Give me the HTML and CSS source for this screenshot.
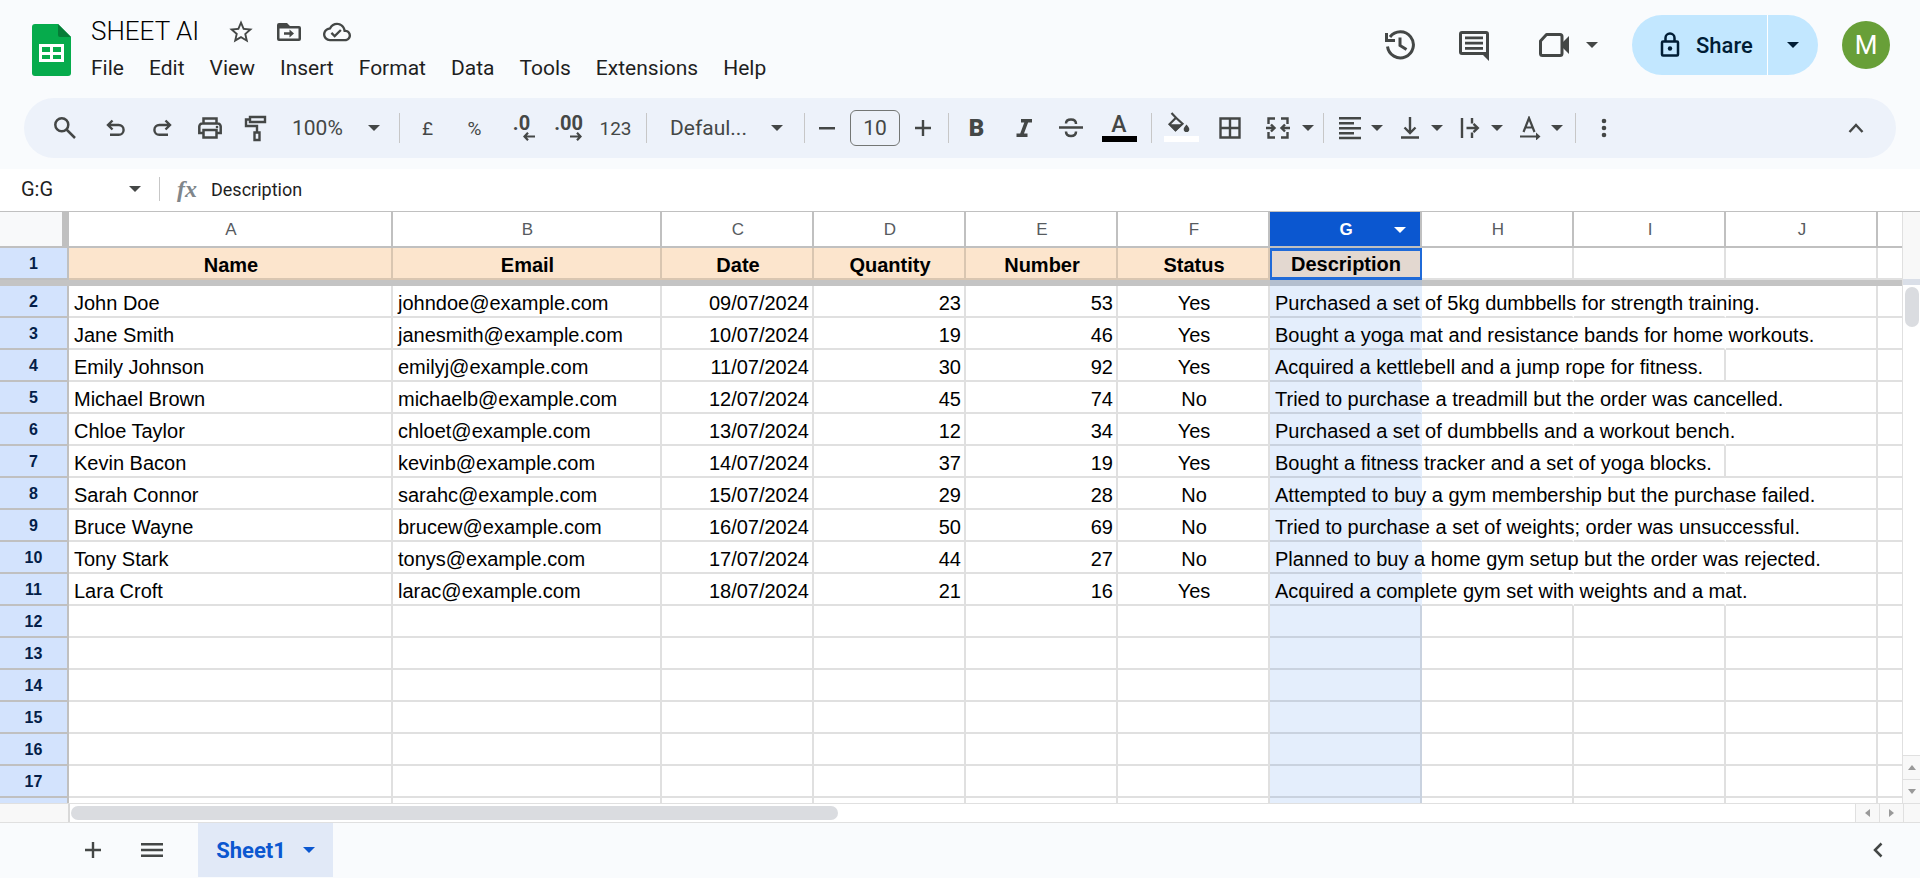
FILE: index.html
```html
<!DOCTYPE html>
<html lang="en">
<head>
    <meta charset="UTF-8"/>
    <meta name="viewport" content="width=device-width, initial-scale=1.0"/>
    <title>SHEET AI</title>
    <link rel="stylesheet" href="styles.css">
</head>
<body>
<svg class="defs" aria-hidden="true">
    <symbol id="caret" viewBox="0 0 12 6"><path d="M0 0h12L6 6z"/></symbol>
</svg>

<header class="header">
    <svg class="logo" viewBox="0 0 39 52" aria-label="Sheets" role="img">
        <path fill="#06ab4c" d="M3 0h23l13 13v36a3 3 0 0 1-3 3H3a3 3 0 0 1-3-3V3a3 3 0 0 1 3-3z"/>
        <path fill="#067c37" d="M26 0l13 13H28a2 2 0 0 1-2-2z"/>
        <path fill="#fff" fill-rule="evenodd" d="M7 20h25v18H7zM10 23v5h8v-5zM21 23v5h8v-5zM10 31v4h8v-4zM21 31v4h8v-4z"/>
    </svg>
    <div class="doc">
        <div class="doc-top">
            <input class="title" aria-label="Document name" value="SHEET AI">
            <button class="icon-btn" aria-label="Star">
                <svg width="28" height="28" viewBox="0 0 24 24"><path d="M22 9.24l-7.19-.62L12 2 9.19 8.63 2 9.24l5.46 4.73L5.82 21 12 17.27 18.18 21l-1.63-7.03L22 9.24zM12 15.4l-3.76 2.27 1-4.28-3.32-2.88 4.38-.38L12 6.1l1.71 4.04 4.38.38-3.32 2.88 1 4.28L12 15.4z"/></svg>
            </button>
            <button class="icon-btn" aria-label="Move">
                <svg width="28" height="26" viewBox="0 0 28 26"><path fill-rule="evenodd" d="M4 4h8l3 3h9a2 2 0 0 1 2 2v11a2 2 0 0 1-2 2H4a2 2 0 0 1-2-2V6a2 2 0 0 1 2-2zM4.500 9.500v10h19v-10z"/><path d="M14.500 10.500l4.500 4-4.500 4v-2.700H9v-2.600h5.500z"/></svg>
            </button>
            <button class="icon-btn" aria-label="Document status">
                <svg width="28" height="26" viewBox="0 0 24 22"><path d="M19.350 9.040C18.670 5.590 15.640 3 12 3 9.110 3 6.600 4.640 5.350 7.040 2.340 7.360 0 9.910 0 13c0 3.310 2.690 6 6 6h13c2.760 0 5-2.240 5-5 0-2.640-2.050-4.780-4.650-4.960zM19 17H6c-2.210 0-4-1.790-4-4 0-2.050 1.530-3.760 3.560-3.970l1.070-.11.5-.95C8.080 6.140 9.940 5 12 5c2.620 0 4.880 1.860 5.390 4.430l.3 1.500 1.530.11c1.560.1 2.780 1.410 2.780 2.960 0 1.650-1.350 3-3 3zm-9-3.820l-2.090-2.090L6.500 12.500 10 16l6.010-6.010-1.410-1.410z"/></svg>
            </button>
        </div>
        <nav class="menu" aria-label="Main menu">
            <button>File</button>
            <button>Edit</button>
            <button>View</button>
            <button>Insert</button>
            <button>Format</button>
            <button>Data</button>
            <button>Tools</button>
            <button>Extensions</button>
            <button>Help</button>
        </nav>
    </div>
    <div class="actions">
        <button class="icon-btn" aria-label="Version history">
            <svg width="32" height="32" viewBox="0 0 32 32" fill="none" stroke="#444746" stroke-width="3"><path d="M3.500 17.500a13 13 0 1 0 2.500-9.500"/><path d="M2.500 4v7.500H11M16 8.500v8l6.500 4"/></svg>
        </button>
        <button class="icon-btn" aria-label="Comments">
            <svg width="32" height="32" viewBox="0 0 32 32"><path fill-rule="evenodd" d="M4 2h24a3 3 0 0 1 3 3v27l-6-6H4a3 3 0 0 1-3-3V5a3 3 0 0 1 3-3zM4 5v18h24V5z"/><path d="M7 7.500h18v2.700H7zM7 12.700h18v2.700H7zM7 18h18v2.700H7z"/></svg>
        </button>
        <button class="icon-btn meet" aria-label="Meet">
            <svg width="32" height="28" viewBox="0 0 32 28"><path fill="none" stroke="#444746" stroke-width="3" stroke-linejoin="round" d="M8.500 3.500H22a2 2 0 0 1 2 2v17a2 2 0 0 1-2 2H4.500a2 2 0 0 1-2-2V10z"/><path d="M24 12l7-7v18l-7-7z"/></svg>
            <svg class="caret"><use href="#caret"/></svg>
        </button>
        <div class="share">
            <button class="share-main">
                <svg width="20" height="26" viewBox="0 0 20 26" fill="none" stroke="#001d35" stroke-width="2.500"><rect x="2" y="9.500" width="16" height="14" rx="1"/><path d="M5.500 9.500V6a4.500 4.500 0 0 1 9 0v3.500"/><circle cx="10" cy="16.500" r="2.200" fill="#001d35" stroke="none"/></svg>
                Share
            </button>
            <button class="share-more" aria-label="Share options"><svg class="caret"><use href="#caret"/></svg></button>
        </div>
        <button class="avatar" aria-label="Account">M</button>
    </div>
</header>

<div class="toolbar" role="toolbar" aria-label="Formatting">
    <button class="tool search" aria-label="Search">
        <svg width="24" height="24" viewBox="0 0 24 24" fill="none" stroke="#444746" stroke-width="2.500"><circle cx="8.800" cy="8.800" r="6.500"/><path d="M13.500 13.500l8.500 8.500"/></svg>
    </button>
    <button class="tool" aria-label="Undo">
        <svg width="24" height="24" viewBox="0 0 24 24" fill="none" stroke="#444746" stroke-width="2.400"><path d="M8.500 4.500L4 9l4.500 4.500M4 9h10.700a4.900 4.900 0 0 1 0 9.800H6"/></svg>
    </button>
    <button class="tool" aria-label="Redo">
        <svg width="24" height="24" viewBox="0 0 24 24" fill="none" stroke="#444746" stroke-width="2.400"><path d="M14.500 4.500L19 9l-4.500 4.500M19 9H8.300a4.900 4.900 0 0 0 0 9.800H17"/></svg>
    </button>
    <button class="tool" aria-label="Print">
        <svg width="26" height="24" viewBox="0 0 26 24" fill="none" stroke="#444746" stroke-width="2.500"><path d="M6.500 7V2.500h13V7M6.500 17H2.300v-6.500A3 3 0 0 1 5.300 7.500h15.400a3 3 0 0 1 3 3V17h-4.200M6.500 14h13v7.500h-13z"/><circle cx="20" cy="11" r="1.300" fill="#444746" stroke="none"/></svg>
    </button>
    <button class="tool" aria-label="Paint format">
        <svg width="26" height="28" viewBox="0 0 26 28" fill="none" stroke="#444746" stroke-width="2.400"><path d="M6 3h15v5H6zM6 5.500H2v6.500h11v6M10.500 18.500h5V26h-5z"/></svg>
    </button>
    <select class="zoom" aria-label="Zoom"><option>100%</option></select>
    <span class="divider"></span>
    <button class="tool sign" aria-label="Format as currency">£</button>
    <button class="tool sign" aria-label="Format as percent">%</button>
    <button class="tool decimals" aria-label="Decrease decimal places">.0
        <svg width="12" height="9" viewBox="0 0 12 9"><path fill="none" stroke="#444746" stroke-width="2.200" d="M5 .8L1.500 4.500 5 8.200M1.500 4.500H12"/></svg>
    </button>
    <button class="tool decimals" aria-label="Increase decimal places">.00
        <svg width="12" height="9" viewBox="0 0 12 9"><path fill="none" stroke="#444746" stroke-width="2.200" d="M7 .8l3.500 3.700L7 8.200M10.500 4.500H0"/></svg>
    </button>
    <button class="tool sign" aria-label="More formats">123</button>
    <span class="divider"></span>
    <select class="font" aria-label="Font"><option>Defaul...</option></select>
    <span class="divider"></span>
    <button class="step" aria-label="Decrease font size"><svg width="18" height="18" viewBox="0 0 18 18"><path d="M1 8h16v2.500H1z"/></svg></button>
    <input class="size" aria-label="Font size" value="10">
    <button class="step" aria-label="Increase font size"><svg width="18" height="18" viewBox="0 0 18 18"><path d="M1 7.800h6.800V1h2.400v6.800H17v2.400h-6.800V17H7.800v-6.800H1z"/></svg></button>
    <span class="divider"></span>
    <button class="tool bold" aria-label="Bold">B</button>
    <button class="tool" aria-label="Italic">
        <svg width="18" height="20" viewBox="0 0 18 20"><path d="M6 1h11v3.400h-3.900L9 15.600h3.500V19H1.500v-3.400h3.700L9.300 4.400H6z"/></svg>
    </button>
    <button class="tool" aria-label="Strikethrough">
        <svg width="24" height="22" viewBox="0 0 24 22" fill="none" stroke="#444746" stroke-width="2.500"><path d="M0 10.500h24M17 7c0-3-2-4.500-5-4.500S7 4 7 6.500M7 14.500c0 3 2 4.500 5 4.500s5-1.500 5-4.500"/></svg>
    </button>
    <button class="tool swatch" aria-label="Text color"><span>A</span><i class="bar black"></i></button>
    <span class="divider"></span>
    <button class="tool swatch" aria-label="Fill color">
        <svg width="28" height="24" viewBox="0 0 28 24"><path fill="none" stroke="#444746" stroke-width="2.200" d="M4.500 1l4.500 4.800-6.500 6.500 6 6 7-6.500-6.800-6.300"/><path d="M2 12.300h14L8.500 19.500zM19.500 12.500c1.900 2.200 2.800 3.500 2.800 4.700a2.800 2.800 0 0 1-5.600 0c0-1.200.9-2.500 2.800-4.700z"/></svg>
        <i class="bar white"></i>
    </button>
    <button class="tool" aria-label="Borders">
        <svg width="22" height="22" viewBox="0 0 22 22" fill="none" stroke="#444746" stroke-width="2.400"><path d="M1.500 1.500h19v19h-19zM11 1.500v19M1.500 11h19"/></svg>
    </button>
    <button class="tool-menu merge" aria-label="Merge cells">
        <svg width="24" height="22" viewBox="0 0 24 22" fill="none" stroke="#444746" stroke-width="2.400"><path d="M9 1.500H2.500V7M15 1.500h6.500V7M9 20.500H2.500V15M15 20.500h6.500V15M0 11h8M24 11h-8M5 7.500L8.500 11 5 14.500M19 7.500L15.500 11l3.500 3.500"/></svg>
        <svg class="caret"><use href="#caret"/></svg>
    </button>
    <span class="divider"></span>
    <button class="tool-menu" aria-label="Horizontal align">
        <svg width="24" height="24" viewBox="0 0 24 24"><path d="M1 1h22v2.400H1zM1 6h15v2.400H1zM1 11h22v2.400H1zM1 16h15v2.400H1zM1 20.800h22v2.400H1z"/></svg>
        <svg class="caret"><use href="#caret"/></svg>
    </button>
    <button class="tool-menu" aria-label="Vertical align">
        <svg width="24" height="24" viewBox="0 0 24 24" fill="none" stroke="#444746" stroke-width="2.400"><path d="M3 21.500h18M12 1v16M6.500 11.500L12 17l5.500-5.500"/></svg>
        <svg class="caret"><use href="#caret"/></svg>
    </button>
    <button class="tool-menu" aria-label="Text wrapping">
        <svg width="24" height="24" viewBox="0 0 24 24" fill="none" stroke="#444746" stroke-width="2.400"><path d="M4 2v20M14 2v5.500M14 16.500V22M8.500 12H20M15.500 7.800l4.300 4.200-4.300 4.200"/></svg>
        <svg class="caret"><use href="#caret"/></svg>
    </button>
    <button class="tool-menu" aria-label="Text rotation">
        <svg width="24" height="24" viewBox="0 0 24 24" fill="none" stroke="#444746" stroke-width="2.200"><path d="M5.500 16L11 2l5.500 14M7.500 11.500h7M2 20.500h18"/><path fill="#444746" stroke="none" d="M18 16.500l4.500 4-4.500 4z"/></svg>
        <svg class="caret"><use href="#caret"/></svg>
    </button>
    <span class="divider"></span>
    <button class="tool" aria-label="More">
        <svg width="6" height="20" viewBox="0 0 6 20"><circle cx="3" cy="3" r="2.300"/><circle cx="3" cy="10" r="2.300"/><circle cx="3" cy="17" r="2.300"/></svg>
    </button>
    <button class="tool collapse" aria-label="Hide the menus">
        <svg width="16" height="12" viewBox="0 0 16 12" fill="none" stroke="#444746" stroke-width="2.400"><path d="M1.500 10L8 3l6.500 7"/></svg>
    </button>
</div>

<div class="formula-bar">
    <input class="name-box" aria-label="Name box" value="G:G">
    <button class="name-more" aria-label="Named ranges"><svg class="caret"><use href="#caret"/></svg></button>
    <span class="fx" aria-hidden="true">fx</span>
    <input class="formula" aria-label="Formula" value="Description">
</div>

<main class="sheet">
    <div class="grid">
        <table>
            <colgroup>
                <col class="c-head"><col class="c-a"><col class="c-b">
                <col class="c"><col class="c"><col class="c"><col class="c"><col class="c">
                <col class="c"><col class="c"><col class="c"><col>
            </colgroup>
            <thead>
            <tr>
                <td class="corner"></td>
                <th>A</th><th>B</th><th>C</th><th>D</th><th>E</th><th>F</th>
                <th class="active">G<button aria-label="Column G options"><svg class="caret"><use href="#caret"/></svg></button></th>
                <th>H</th><th>I</th><th>J</th><th></th>
            </tr>
            </thead>
            <tbody class="frozen">
            <tr>
                <th>1</th>
                <td>Name</td><td>Email</td><td>Date</td><td>Quantity</td><td>Number</td><td>Status</td>
                <td class="selected">Description</td>
                <td class="blank"></td><td class="blank"></td><td class="blank"></td><td class="blank"></td>
            </tr>
            <tr class="freeze"><td colspan="7"></td><td class="g"></td><td colspan="4"></td></tr>
            </tbody>
            <tbody class="rows">
            <tr><th>2</th><td>John Doe</td><td>johndoe@example.com</td><td>09/07/2024</td><td>23</td><td>53</td><td>Yes</td><td class="over">Purchased a set of 5kg dumbbells for strength training.</td><td class="over"></td><td class="over"></td><td></td><td></td></tr>
            <tr><th>3</th><td>Jane Smith</td><td>janesmith@example.com</td><td>10/07/2024</td><td>19</td><td>46</td><td>Yes</td><td class="over">Bought a yoga mat and resistance bands for home workouts.</td><td class="over"></td><td class="over"></td><td></td><td></td></tr>
            <tr><th>4</th><td>Emily Johnson</td><td>emilyj@example.com</td><td>11/07/2024</td><td>30</td><td>92</td><td>Yes</td><td class="over">Acquired a kettlebell and a jump rope for fitness.</td><td class="over"></td><td></td><td></td><td></td></tr>
            <tr><th>5</th><td>Michael Brown</td><td>michaelb@example.com</td><td>12/07/2024</td><td>45</td><td>74</td><td>No</td><td class="over">Tried to purchase a treadmill but the order was cancelled.</td><td class="over"></td><td class="over"></td><td></td><td></td></tr>
            <tr><th>6</th><td>Chloe Taylor</td><td>chloet@example.com</td><td>13/07/2024</td><td>12</td><td>34</td><td>Yes</td><td class="over">Purchased a set of dumbbells and a workout bench.</td><td class="over"></td><td class="over"></td><td></td><td></td></tr>
            <tr><th>7</th><td>Kevin Bacon</td><td>kevinb@example.com</td><td>14/07/2024</td><td>37</td><td>19</td><td>Yes</td><td class="over">Bought a fitness tracker and a set of yoga blocks.</td><td class="over"></td><td></td><td></td><td></td></tr>
            <tr><th>8</th><td>Sarah Connor</td><td>sarahc@example.com</td><td>15/07/2024</td><td>29</td><td>28</td><td>No</td><td class="over">Attempted to buy a gym membership but the purchase failed.</td><td class="over"></td><td class="over"></td><td></td><td></td></tr>
            <tr><th>9</th><td>Bruce Wayne</td><td>brucew@example.com</td><td>16/07/2024</td><td>50</td><td>69</td><td>No</td><td class="over">Tried to purchase a set of weights; order was unsuccessful.</td><td class="over"></td><td class="over"></td><td></td><td></td></tr>
            <tr><th>10</th><td>Tony Stark</td><td>tonys@example.com</td><td>17/07/2024</td><td>44</td><td>27</td><td>No</td><td class="over">Planned to buy a home gym setup but the order was rejected.</td><td class="over"></td><td class="over"></td><td></td><td></td></tr>
            <tr><th>11</th><td>Lara Croft</td><td>larac@example.com</td><td>18/07/2024</td><td>21</td><td>16</td><td>Yes</td><td class="over">Acquired a complete gym set with weights and a mat.</td><td class="over"></td><td class="over"></td><td></td><td></td></tr>
            <tr><th>12</th><td></td><td></td><td></td><td></td><td></td><td></td><td></td><td></td><td></td><td></td><td></td></tr>
            <tr><th>13</th><td></td><td></td><td></td><td></td><td></td><td></td><td></td><td></td><td></td><td></td><td></td></tr>
            <tr><th>14</th><td></td><td></td><td></td><td></td><td></td><td></td><td></td><td></td><td></td><td></td><td></td></tr>
            <tr><th>15</th><td></td><td></td><td></td><td></td><td></td><td></td><td></td><td></td><td></td><td></td><td></td></tr>
            <tr><th>16</th><td></td><td></td><td></td><td></td><td></td><td></td><td></td><td></td><td></td><td></td><td></td></tr>
            <tr><th>17</th><td></td><td></td><td></td><td></td><td></td><td></td><td></td><td></td><td></td><td></td><td></td></tr>
            <tr><th></th><td></td><td></td><td></td><td></td><td></td><td></td><td></td><td></td><td></td><td></td><td></td></tr>
            </tbody>
        </table>
    </div>
    <div class="vscroll">
        <div class="vscroll-head"></div>
        <div class="vthumb"></div>
        <button class="arrow" aria-label="Scroll up"><svg width="8" height="5" viewBox="0 0 8 5"><path d="M0 5h8L4 0z"/></svg></button>
        <button class="arrow" aria-label="Scroll down"><svg width="8" height="5" viewBox="0 0 8 5"><path d="M0 0h8L4 5z"/></svg></button>
    </div>
</main>
<div class="hscroll">
    <div class="hscroll-head"></div>
    <div class="htrack"><div class="hthumb"></div></div>
    <button class="arrow" aria-label="Scroll left"><svg width="5" height="8" viewBox="0 0 5 8"><path d="M5 0v8L0 4z"/></svg></button>
    <button class="arrow" aria-label="Scroll right"><svg width="5" height="8" viewBox="0 0 5 8"><path d="M0 0v8l5-4z"/></svg></button>
    <div class="hscroll-end"></div>
</div>

<footer class="tabs">
    <button class="tab-btn" aria-label="Add sheet"><svg width="18" height="18" viewBox="0 0 18 18"><path d="M1 7.800h6.800V1h2.400v6.800H17v2.400h-6.800V17H7.800v-6.800H1z"/></svg></button>
    <button class="tab-btn" aria-label="All sheets"><svg width="22" height="16" viewBox="0 0 22 16"><path d="M0 1h22v2.400H0zM0 6.800h22v2.400H0zM0 12.600h22V15H0z"/></svg></button>
    <button class="tab">Sheet1 <svg class="caret"><use href="#caret"/></svg></button>
    <button class="tab-btn side" aria-label="Show side panel"><svg width="10" height="16" viewBox="0 0 10 16" fill="none" stroke="#444746" stroke-width="2.500"><path d="M8.500 1.500L2 8l6.500 6.500"/></svg></button>
</footer>
</body>
</html>
```
FILE: styles.css
```css
* {
    box-sizing: border-box;
}

body {
    margin: 0;
    height: 100vh;
    padding-bottom: 1px;
    display: flex;
    flex-direction: column;
    overflow: hidden;
    background: #f9fbfd;
    color: #1f1f1f;
    font-family: Roboto, Arial, sans-serif;
}

button,
input,
select {
    margin: 0;
    padding: 0;
    border: 0;
    background: transparent;
    color: inherit;
    font: inherit;
}

svg {
    display: block;
    flex: none;
    fill: #444746;
}

svg[fill="none"] {
    fill: none;
}

.defs {
    position: absolute;
    width: 0;
    height: 0;
}

.caret {
    width: 12px;
    height: 6px;
}

/* header */
.header {
    flex: none;
    height: 98px;
    padding: 0 30px 0 32px;
    display: flex;
}

.logo {
    width: 39px;
    height: 52px;
    margin: 24px 20px 0 0;
}

.doc-top {
    display: flex;
    align-items: center;
    gap: 20px;
    height: 36px;
    margin-top: 14px;
}

.title {
    width: 116px;
    height: 36px;
    padding-bottom: 2px;
    color: #000;
    font-size: 26px;
    font-weight: 300;
}

.menu {
    display: flex;
    gap: 25px;
    margin-top: 4px;
    font-size: 21px;
    line-height: 28px;
}

.actions {
    display: flex;
    align-items: center;
    gap: 42px;
    height: 60px;
    margin: 15px 0 0 auto;
}

.meet {
    display: flex;
    align-items: center;
    gap: 16px;
    margin: 0 -8px 0 6px;
}

.share {
    display: flex;
    height: 60px;
    border-radius: 30px;
    background: #c2e7ff;
    color: #001d35;
    font-size: 22px;
    font-weight: 500;
}

.share .caret {
    fill: #001d35;
}

.share-main {
    width: 136px;
    padding-left: 28px;
    display: flex;
    align-items: center;
    gap: 16px;
    border-right: 1px solid #fff;
}

.share-more {
    width: 50px;
    padding-left: 19px;
}

.avatar {
    width: 48px;
    height: 48px;
    margin-left: -18px;
    border-radius: 50%;
    background: #689f38;
    color: #fff;
    font-size: 26px;
}

/* toolbar */
.toolbar {
    flex: none;
    height: 60px;
    margin: 0 24px 11px;
    padding: 0 17px;
    display: flex;
    align-items: center;
    border-radius: 30px;
    background: #edf2fa;
    color: #444746;
}

.tool,
.tool-menu,
.step {
    flex: none;
    display: flex;
    align-items: center;
    justify-content: center;
    height: 44px;
}

.tool {
    width: 47px;
}

.tool.search {
    margin-right: 4px;
}

.tool.swatch {
    width: 50px;
    flex-direction: column;
    justify-content: flex-end;
    padding-bottom: 8px;
    font-size: 23px;
    line-height: 22px;
    font-weight: 500;
}

.tool.collapse {
    margin-left: auto;
}

.tool-menu {
    width: 60px;
    gap: 9px;
    padding-left: 5px;
}

.tool-menu.merge {
    width: 63px;
    gap: 12px;
    padding-left: 11px;
}

.step {
    width: 36px;
}

.divider {
    width: 1px;
    height: 30px;
    margin: 0 4px 0 7px;
    background: #c7c7c7;
}

.zoom,
.font {
    appearance: none;
    height: 44px;
    font-size: 21px;
    background: url("data:image/svg+xml,%3Csvg xmlns='http://www.w3.org/2000/svg' width='12' height='6'%3E%3Cpath fill='%23444746' d='M0 0h12L6 6z'/%3E%3C/svg%3E") no-repeat right 12px center;
}

.zoom {
    width: 112px;
    padding-left: 12px;
}

.font {
    width: 146px;
    padding-left: 19px;
    background-position: right 14px center;
}

.sign {
    font-size: 19px;
}

.decimals {
    flex-direction: column;
    font-size: 20px;
    font-weight: 700;
    line-height: 17px;
}

.decimals svg {
    align-self: flex-end;
    margin-right: 10px;
}

.size {
    width: 50px;
    height: 36px;
    margin: 0 5px;
    border: 1px solid #747775;
    border-radius: 6px;
    text-align: center;
    font-size: 21px;
}

.bold {
    font-size: 24px;
    font-weight: 900;
}

.bar {
    width: 35px;
    height: 6px;
}

.black {
    background: #000;
}

.white {
    background: #fff;
}

/* formula bar */
.formula-bar {
    flex: none;
    display: flex;
    align-items: center;
    height: 43px;
    padding-bottom: 2px;
    border-bottom: 1px solid #c0c0c0;
    background: #fff;
}

.name-box {
    width: 112px;
    padding-left: 21px;
    font-size: 20px;
}

.name-more {
    width: 48px;
    height: 24px;
    padding-left: 17px;
    border-right: 1px solid #c7c7c7;
}

.fx {
    width: 51px;
    padding-left: 17px;
    color: #80868b;
    font: italic bold 24px/30px "Liberation Serif", serif;
}

.formula {
    flex: 1;
    font-size: 18px;
}

/* grid */
.sheet {
    flex: 1;
    min-height: 0;
    display: flex;
    background: #fff;
}

.grid {
    flex: 1;
    min-width: 0;
    overflow: hidden;
    font-family: "Liberation Sans", Arial, sans-serif;
}

table {
    width: 100%;
    table-layout: fixed;
    border-collapse: separate;
    border-spacing: 0;
}

.c-head {
    width: 69px;
}

.c-a {
    width: 324px;
}

.c-b {
    width: 269px;
}

.c {
    width: 152px;
}

th,
td {
    height: 32px;
    padding: 2px 0 0 2px;
    border: 0 solid #e0e0e0;
    border-width: 0 2px 2px 0;
    white-space: nowrap;
}

td {
    padding: 0 3px 0 5px;
    vertical-align: bottom;
    font-size: 20px;
    line-height: 26px;
    color: #000;
}

th:last-child,
td:last-child {
    border-right: 0;
}

thead th,
.corner {
    height: 36px;
    border-color: #c0c0c0;
    color: #575b5f;
    font-size: 17px;
    font-weight: 400;
}

.corner {
    border-right-width: 7px;
    background: #f8f9fa;
}

thead .active {
    position: relative;
    background: #0b57d0;
    color: #fff;
    font-weight: 700;
}

.active button {
    position: absolute;
    right: 14px;
    top: 15px;
}

.active .caret {
    fill: #fff;
}

tbody th {
    padding-left: 0;
    border-color: #c0c0c0;
    background: #d3e3fd;
    color: #041e49;
    font-size: 16px;
    line-height: 20px;
}

.frozen td {
    border-color: #d9c6b1;
    background: #fce5cd;
    text-align: center;
    font-weight: 700;
}

.frozen .blank {
    border-color: #e0e0e0;
    background: #fff;
}

.frozen .selected {
    padding: 0;
    border: 3px solid #1f6ad8;
    border-left-width: 2px;
    border-right-width: 2px;
    background: #e3d8d0;
    line-height: 25px;
}

.frozen .freeze td {
    height: 6px;
    padding: 0;
    border: 0;
    background: #c4c4c4;
}

.frozen .freeze .g {
    background: #b4bfcf;
}

.rows td:nth-child(4),
.rows td:nth-child(5),
.rows td:nth-child(6) {
    text-align: right;
}

.rows td:nth-child(7) {
    text-align: center;
}

.rows td:nth-child(8) {
    border-color: #c9d2df;
    background: #e4eefc;
}

.rows .over,
.rows td.over:nth-child(8) {
    border-right-color: transparent;
}

/* scrollbars */
.vscroll {
    flex: none;
    width: 18px;
    display: flex;
    flex-direction: column;
    border-left: 1px solid #e0e0e0;
}

.vscroll-head {
    height: 73px;
    border-bottom: 6px solid #dadfe8;
    background: #f8f8f8;
}

.vthumb {
    width: 14px;
    height: 40px;
    margin: 2px 2px auto;
    border-radius: 7px;
    background: #dadce0;
}

.arrow {
    display: flex;
    align-items: center;
    justify-content: center;
    border: 1px solid #e0e0e0;
    background: #f8f8f8;
}

.arrow svg {
    fill: #999;
}

.vscroll .arrow {
    height: 24px;
    border-width: 1px 0 0;
}

.hscroll {
    flex: none;
    display: flex;
    height: 20px;
    border-top: 1px solid #e0e0e0;
    border-bottom: 1px solid #e0e0e0;
    background: #fff;
}

.hscroll-head {
    width: 70px;
    border-right: 2px solid #d9d9d9;
    background: #f8f8f8;
}

.htrack {
    flex: 1;
    padding: 2px 1px;
}

.hthumb {
    width: 43%;
    height: 14px;
    border-radius: 7px;
    background: #dadce0;
}

.hscroll .arrow {
    width: 24px;
    border-width: 0 0 0 1px;
}

.hscroll-end {
    width: 17px;
    border-left: 1px solid #e0e0e0;
    background: #f8f8f8;
}

/* sheet tabs */
.tabs {
    flex: none;
    display: flex;
    height: 54px;
    padding: 0 19px 0 63px;
}

.tab-btn {
    width: 59px;
    display: flex;
    align-items: center;
    justify-content: center;
}

.tab {
    width: 135px;
    margin-left: 17px;
    display: flex;
    align-items: center;
    justify-content: center;
    gap: 17px;
    background: #e1e9f7;
    color: #0b57d0;
    font-size: 22px;
    font-weight: 700;
}

.tab .caret {
    fill: #0b57d0;
}

.side {
    width: 46px;
    margin-left: auto;
}
```
